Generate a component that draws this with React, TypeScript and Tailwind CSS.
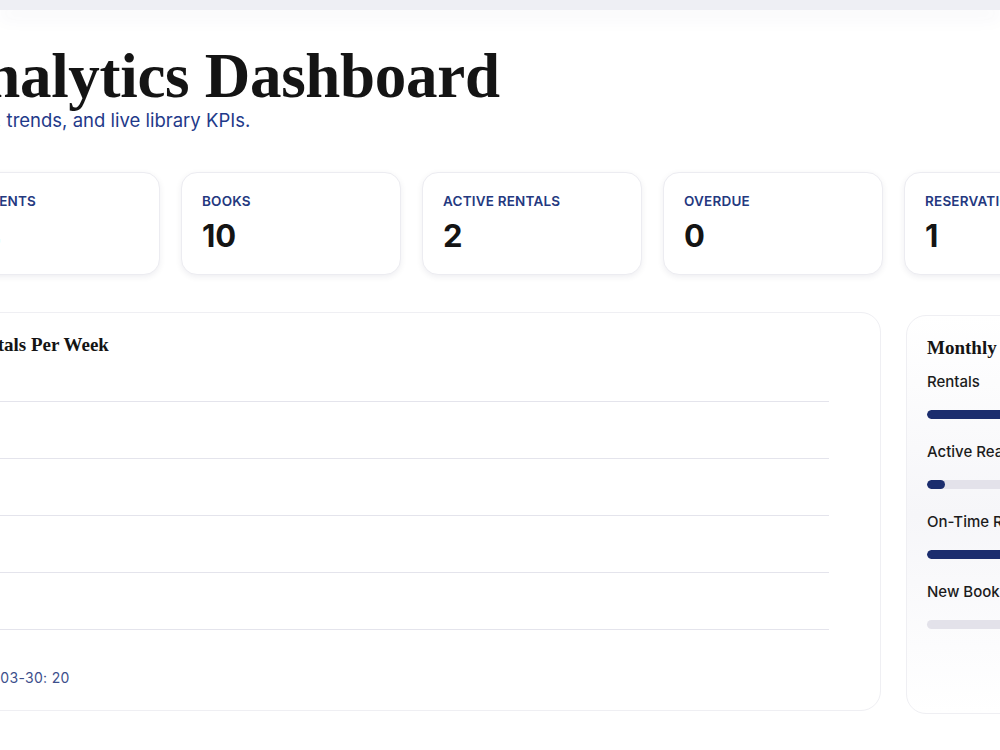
import React from "react";

const stats = [
  { label: "Students", value: "24" },
  { label: "Books", value: "10" },
  { label: "Active Rentals", value: "2" },
  { label: "Overdue", value: "0" },
  { label: "Reservations", value: "1" },
];

const monthly = [
  { label: "Rentals", value: "100%", pct: 100 },
  { label: "Active Readers", value: "10%", pct: 10 },
  { label: "On-Time Returns", value: "100%", pct: 100 },
  { label: "New Books", value: "0%", pct: 0 },
];

const serif = { fontFamily: '"Liberation Serif", "DejaVu Serif", serif' };

export default function App() {
  return (
    <div
      className="min-h-screen w-full overflow-hidden bg-white"
      style={{ fontFamily: 'Inter, "Noto Sans", sans-serif' }}
    >
      {/* top bar */}
      <div className="h-[10px] bg-[#eeeff4] shadow-[0_8px_18px_rgba(60,60,110,0.05)]" />

      <main className="ml-[-60px] w-[1184px] pt-[35px]">
        {/* Header */}
        <h1
          className="text-[63px] font-bold leading-none tracking-[-0.3px] text-[#141414]"
          style={serif}
        >
          Analytics Dashboard
        </h1>
        <p className="mt-[2px] text-[18.5px] leading-5 text-[#1f3a8a]">
          Usage, trends, and live library KPIs.
        </p>

        {/* KPI cards */}
        <div className="mt-[42px] grid grid-cols-5 gap-[21px]">
          {stats.map((s) => (
            <div
              key={s.label}
              className="h-[103px] rounded-[16px] border border-[#ececf1] bg-white px-5 pt-[18px] shadow-[0_2px_6px_rgba(20,20,60,0.07)]"
            >
              <div className="text-[13.5px] font-semibold uppercase leading-5 tracking-[0.2px] text-[#24397f]">
                {s.label}
              </div>
              <div className="mt-[5px] text-[31px] font-bold leading-10 text-[#141414]">
                {s.value}
              </div>
            </div>
          ))}
        </div>

        {/* Chart + monthly */}
        <div className="mt-[37px] grid grid-cols-[941px_1fr] items-start gap-[25px]">
          <section className="h-[399px] rounded-[20px] border border-[#efeff3] bg-white pl-6 pr-[51px] pt-[20px]">
            <h2 className="text-[19px] font-bold leading-6 text-[#141414]" style={serif}>
              Rentals Per Week
            </h2>
            <div className="mt-[44px] flex flex-col">
              {[0, 1, 2, 3, 4].map((i) => (
                <div key={i} className="h-[57px] border-t-[1.5px] border-[#e4e4ec]" />
              ))}
            </div>
            <div className="ml-[-7px] mt-[-19px] text-[14px] tracking-[0.3px] text-[#3d4f8c]">
              2025-03-30: 20
            </div>
          </section>

          <section className="mt-[3px] h-[399px] rounded-[20px] border border-[#efeff3] bg-gradient-to-b from-white via-[#f6f6f9] to-white px-5 pt-[20px]">
            <h2 className="text-[19px] font-bold leading-6 text-[#141414]" style={serif}>
              Monthly Overview
            </h2>
            <div className="mt-[8px] flex flex-col">
              {monthly.map((m) => (
                <div key={m.label} className="h-[70px] pt-[2px]">
                  <div className="flex justify-between text-[15px] font-medium leading-6 text-[#1c1c1c]">
                    <span className="whitespace-nowrap">{m.label}</span>
                    <span>{m.value}</span>
                  </div>
                  <div className="mt-[16px] h-[9px] w-full overflow-hidden rounded-full bg-[#e3e2ea]">
                    <div
                      className="h-full rounded-full bg-[#1b2d6e]"
                      style={{ width: `${m.pct}%` }}
                    />
                  </div>
                </div>
              ))}
            </div>
          </section>
        </div>
      </main>
    </div>
  );
}
